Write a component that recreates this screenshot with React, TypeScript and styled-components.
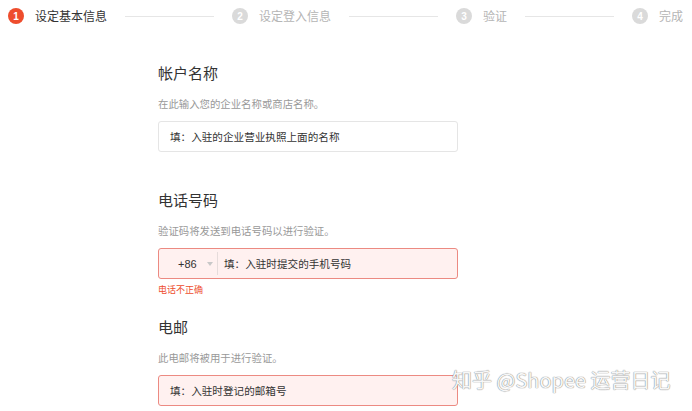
import React from 'react';
import styled, { createGlobalStyle } from 'styled-components';

const GlobalStyle = createGlobalStyle`
  html, body {
    margin: 0;
    padding: 0;
    background: #fff;
  }
  body {
    font-family: "Noto Sans CJK SC", "Noto Sans", "Liberation Sans", sans-serif;
    color: #333;
  }
`;

const steps = ['设定基本信息', '设定登入信息', '验证', '完成'];

const App: React.FC = () => {
  return (
    <Page>
      <GlobalStyle />
      <Stepper>
        {steps.map((label, i) => (
          <React.Fragment key={label}>
            {i > 0 && <StepLine />}
            <Step>
              <StepDot $active={i === 0}>{i + 1}</StepDot>
              <StepLabel $active={i === 0}>{label}</StepLabel>
            </Step>
          </React.Fragment>
        ))}
      </Stepper>

      <Form>
        <Section>
          <Title>帐户名称</Title>
          <Hint>在此输入您的企业名称或商店名称。</Hint>
          <InputBox>
            <InputText>填：入驻的企业营业执照上面的名称</InputText>
          </InputBox>
          <ErrorSlot />
        </Section>

        <Section>
          <Title>电话号码</Title>
          <Hint>验证码将发送到电话号码以进行验证。</Hint>
          <InputBox $error>
            <Prefix>
              +86
              <Caret />
            </Prefix>
            <Divider />
            <InputText $tight>填：入驻时提交的手机号码</InputText>
          </InputBox>
          <ErrorSlot>电话不正确</ErrorSlot>
        </Section>

        <Section>
          <Title>电邮</Title>
          <Hint>此电邮将被用于进行验证。</Hint>
          <InputBox $error>
            <InputText>填：入驻时登记的邮箱号</InputText>
          </InputBox>
        </Section>
      </Form>

      <Watermark>知乎 @Shopee 运营日记</Watermark>
    </Page>
  );
};

export default App;

const Page = styled.div`
  position: relative;
  width: 692px;
  height: 411px;
  overflow: hidden;
`;

const Stepper = styled.div`
  display: flex;
  align-items: center;
  height: 32px;
  padding: 0 9px 0 8px;
`;

const Step = styled.div`
  display: flex;
  align-items: center;
  gap: 11px;
  flex-shrink: 0;
`;

const StepDot = styled.span<{ $active?: boolean }>`
  width: 16px;
  height: 16px;
  border-radius: 50%;
  background: ${(p) => (p.$active ? '#ee4d2d' : '#dadada')};
  color: #fff;
  font-family: "Liberation Sans", Arial, sans-serif;
  font-size: 10px;
  font-weight: bold;
  display: flex;
  align-items: center;
  justify-content: center;
`;

const StepLabel = styled.span<{ $active?: boolean }>`
  font-size: 12px;
  line-height: 16px;
  color: ${(p) => (p.$active ? '#333' : '#b5b5b5')};
`;

const StepLine = styled.div`
  flex: 1;
  height: 1px;
  background: #e6e6e6;
  margin: 0 18px;
`;

const Form = styled.div`
  padding: 31px 0 0 158px;
  width: 300px;
`;

const Section = styled.div`
  display: flex;
  flex-direction: column;
  margin-bottom: 16px;
`;

const Title = styled.div`
  font-size: 15px;
  line-height: 20px;
  color: #333;
`;

const Hint = styled.div`
  margin-top: 13px;
  font-size: 10.4px;
  line-height: 16px;
  color: #999;
`;

const InputBox = styled.div<{ $error?: boolean }>`
  margin-top: 9px;
  height: 31px;
  box-sizing: border-box;
  display: flex;
  align-items: center;
  border: 1px solid ${(p) => (p.$error ? '#ec8a82' : '#e5e5e5')};
  background: ${(p) => (p.$error ? '#fff1f0' : '#fff')};
  border-radius: 3px;
`;

const InputText = styled.span<{ $tight?: boolean }>`
  padding-left: ${(p) => (p.$tight ? '6px' : '11px')};
  font-size: 10.6px;
  color: #333;
`;

const Prefix = styled.div`
  display: flex;
  align-items: center;
  padding-left: 19px;
  width: 58px;
  box-sizing: border-box;
  font-family: "Liberation Sans", Arial, sans-serif;
  font-size: 11px;
  color: #333;
`;

const Caret = styled.span`
  margin-left: 10px;
  width: 0;
  height: 0;
  border-left: 3px solid transparent;
  border-right: 3px solid transparent;
  border-top: 4px solid #c8c8c8;
`;

const Divider = styled.div`
  width: 1px;
  align-self: stretch;
  margin: 3px 0;
  background: #e6dcdb;
`;

const ErrorSlot = styled.div`
  height: 22px;
  padding-top: 4px;
  box-sizing: border-box;
  font-size: 9px;
  line-height: 14px;
  color: #ee4d2d;
`;

const Watermark = styled.div`
  position: absolute;
  left: 452px;
  top: 367px;
  font-size: 20px;
  line-height: 26px;
  white-space: nowrap;
  color: rgba(255, 255, 255, 0.95);
  text-shadow: 0 0 1px #888, 0 0 1px #888;
`;
